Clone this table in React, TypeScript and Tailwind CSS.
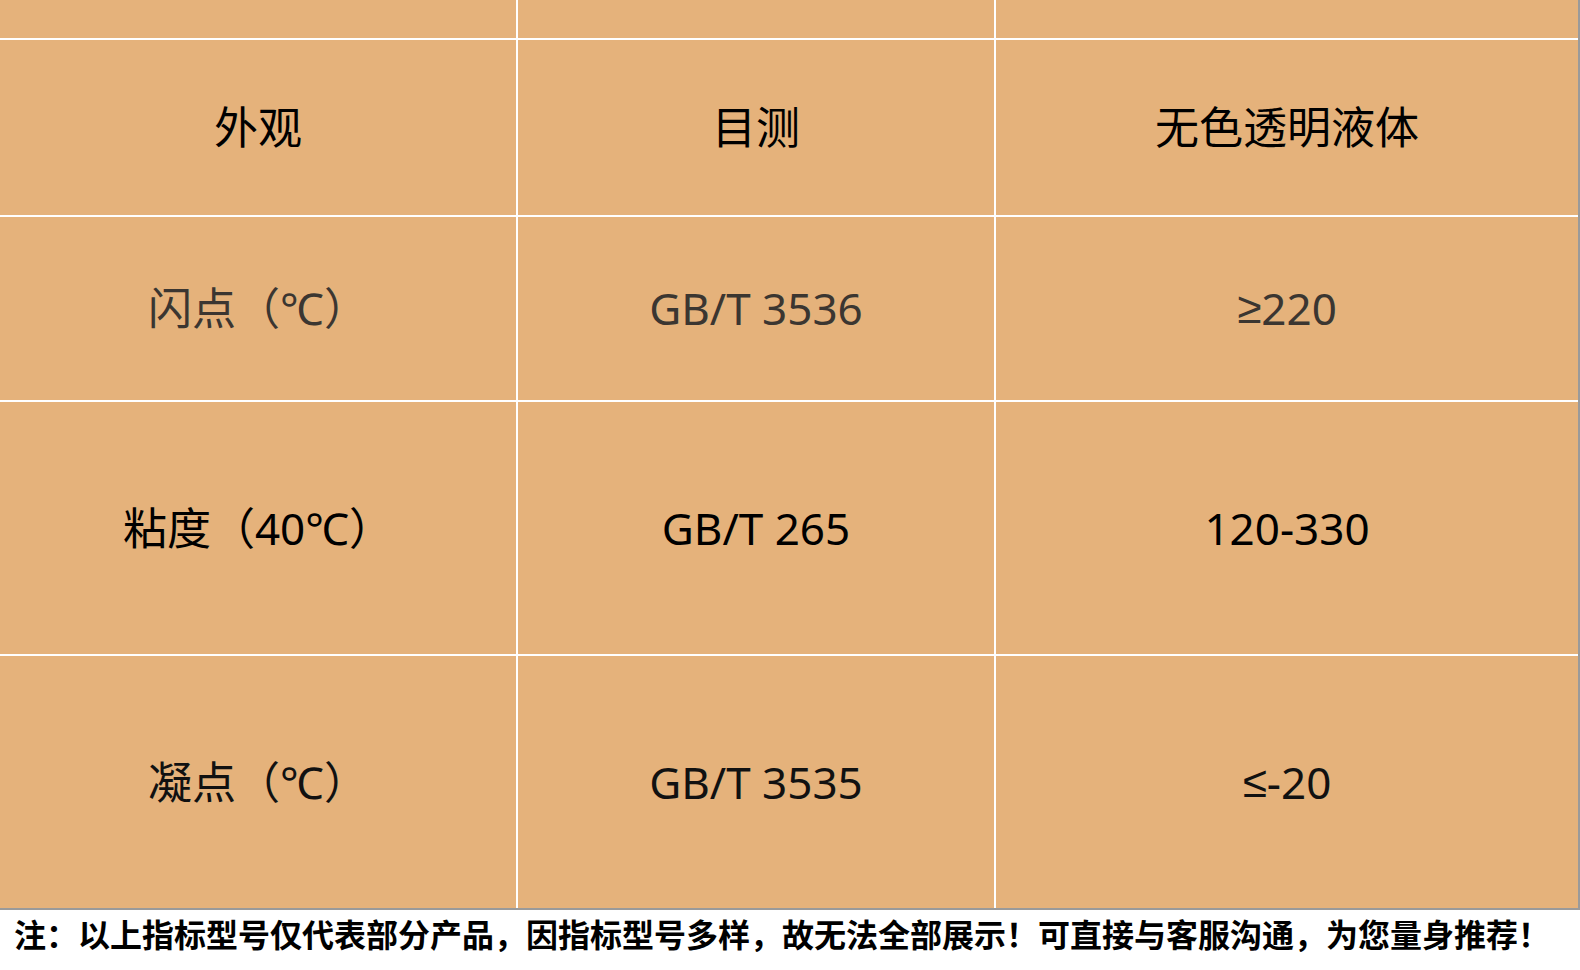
import type { ReactNode } from 'react';

const sym = (s: string) => <span className="font-['Liberation_Sans',sans-serif]">{s}</span>;

const rows: { cells: ReactNode[]; tone: string; h: string }[] = [
  { cells: ['', '', ''], tone: 'text-black', h: 'h-[38px]' },
  { cells: ['外观', '目测', '无色透明液体'], tone: 'text-black', h: 'h-[175px]' },
  { cells: ['闪点（℃）', 'GB/T 3536', <>{sym('≥')}220</>], tone: 'text-[#3b3631]', h: 'h-[183px]' },
  { cells: ['粘度（40℃）', 'GB/T 265', '120-330'], tone: 'text-black', h: 'h-[252px]' },
  { cells: ['凝点（℃）', 'GB/T 3535', <>{sym('≤')}-20</>], tone: 'text-[#111]', h: 'h-[252px]' },
];

export default function App() {
  return (
    <div className="w-[1580px] h-[970px] bg-white overflow-hidden font-['Noto_Sans','Noto_Sans_CJK_SC',sans-serif]">
      <div className="w-[1580px] border-r-2 border-b-2 border-[#9a9a9a] bg-white">
        <div className="grid grid-cols-[516px_476px_582px] gap-[2px]">
          {rows.map((row, i) =>
            row.cells.map((c, j) => (
              <div
                key={`${i}-${j}`}
                className={`${row.h} bg-[#e5b27b] flex items-center justify-center pb-[1px] text-[44px] leading-none ${row.tone}`}
              >
                {c}
              </div>
            ))
          )}
        </div>
      </div>
      <div className="h-[60px] flex items-center pl-[14px] pb-[14px]">
        <p className="text-[32px] font-bold text-black leading-none whitespace-nowrap font-['Noto_Sans_CJK_SC',sans-serif]">
          注：以上指标型号仅代表部分产品，因指标型号多样，故无法全部展示！可直接与客服沟通，为您量身推荐！
        </p>
      </div>
    </div>
  );
}
